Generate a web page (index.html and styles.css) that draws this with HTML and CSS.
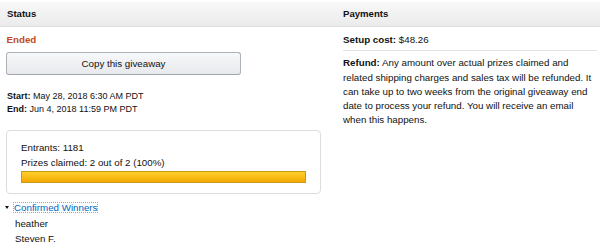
FILE: index.html
```html
<!DOCTYPE html>
<html>
<head>
<meta charset="utf-8">
<link rel="stylesheet" href="styles.css">
</head>
<body>
<div class="page">
  <div class="head-row">
    <div class="head-cell">Status</div>
    <div class="head-cell head-right">Payments</div>
  </div>
  <div class="body-row">
    <div class="col-left">
      <div class="state">Ended</div>
      <button class="btn">Copy this giveaway</button>
      <div class="dates">
        <div><b>Start:</b> May 28, 2018 6:30 AM PDT</div>
        <div><b>End:</b> Jun 4, 2018 11:59 PM PDT</div>
      </div>
      <div class="box">
        <div>Entrants: 1181</div>
        <div>Prizes claimed: 2 out of 2 (100%)</div>
        <div class="bar"><div class="fill" style="width:100%"></div></div>
      </div>
      <div class="expander">
        <span class="caret"></span><span class="link">Confirmed Winners</span>
      </div>
      <ul class="winners">
        <li>heather</li>
        <li>Steven F.</li>
      </ul>
    </div>
    <div class="col-right">
      <div class="cost"><b>Setup cost:</b> $48.26</div>
      <p class="refund"><b>Refund:</b> Any amount over actual prizes claimed and related shipping charges and sales tax will be refunded. It can take up to two weeks from the original giveaway end date to process your refund. You will receive an email when this happens.</p>
    </div>
  </div>
</div>
</body>
</html>
```

FILE: styles.css
```css
* { box-sizing: border-box; }
html, body { margin: 0; padding: 0; background: #fff; }
body {
  font-family: "Liberation Sans", Arial, sans-serif;
  font-size: 9.75px;
  line-height: 14.25px;
  color: #111;
}
.page { padding-top: 2px; }
.head-row {
  display: grid;
  grid-template-columns: 336px 1fr;
  height: 25px;
  background: linear-gradient(#f8f8f8, #ebebeb);
  border-bottom: 1px solid #dcdcdc;
  align-items: center;
}
.head-cell {
  font-weight: bold;
  font-size: 9.6px;
  padding-left: 7px;
  padding-top: 1px;
}
.body-row {
  display: grid;
  grid-template-columns: 336px 1fr;
}
.col-left { padding-left: 6px; }
.state {
  color: #c34a1e;
  font-weight: bold;
  margin-top: 5.5px;
  padding-left: 0.5px;
}
.btn {
  display: block;
  width: 235px;
  height: 23px;
  margin-top: 5px;
  border: 1px solid #adb1b8;
  border-bottom-color: #a2a6ac;
  border-radius: 3px;
  background: linear-gradient(#f7f8fa, #e7e9ec);
  font-family: "Liberation Sans", Arial, sans-serif;
  font-size: 9.75px;
  color: #111;
  padding: 0;
}
.dates {
  margin-top: 15px;
  font-size: 9px;
  line-height: 13.3px;
  padding-left: 1px;
}
.box {
  width: 315px;
  margin-top: 14px;
  border: 1px solid #ddd;
  border-radius: 4px;
  padding: 10px 14px 10px 14px;
}
.bar {
  margin-top: 1px;
  height: 12px;
  border: 1px solid #c99a16;
  background: #f2f2f2;
}
.fill {
  height: 100%;
  background: linear-gradient(#ffd02e, #f3a800);
}
.expander {
  display: flex;
  align-items: center;
  margin-top: 8px;
  margin-left: -2px;
}
.caret {
  width: 0;
  height: 0;
  border-left: 2.5px solid transparent;
  border-right: 2.5px solid transparent;
  border-top: 3.5px solid #111;
  margin: 0 4px 0 1px;
}
.link {
  color: #0066c0;
  outline: 1px dotted #9aa;
  outline-offset: -1px;
  padding: 0 1px;
  line-height: 11px;
  margin-left: 0;
}
.winners {
  list-style: none;
  margin: 3px 0 0 0;
  padding: 0 0 0 9px;
  line-height: 15px;
}
.col-right { padding: 0 3px 0 7px; }
.cost {
  margin-top: 6px;
  padding-bottom: 3px;
  border-bottom: 1px solid #e3e3e3;
}
.refund {
  margin: 5px 0 0 0;
  line-height: 14.3px;
}
```
